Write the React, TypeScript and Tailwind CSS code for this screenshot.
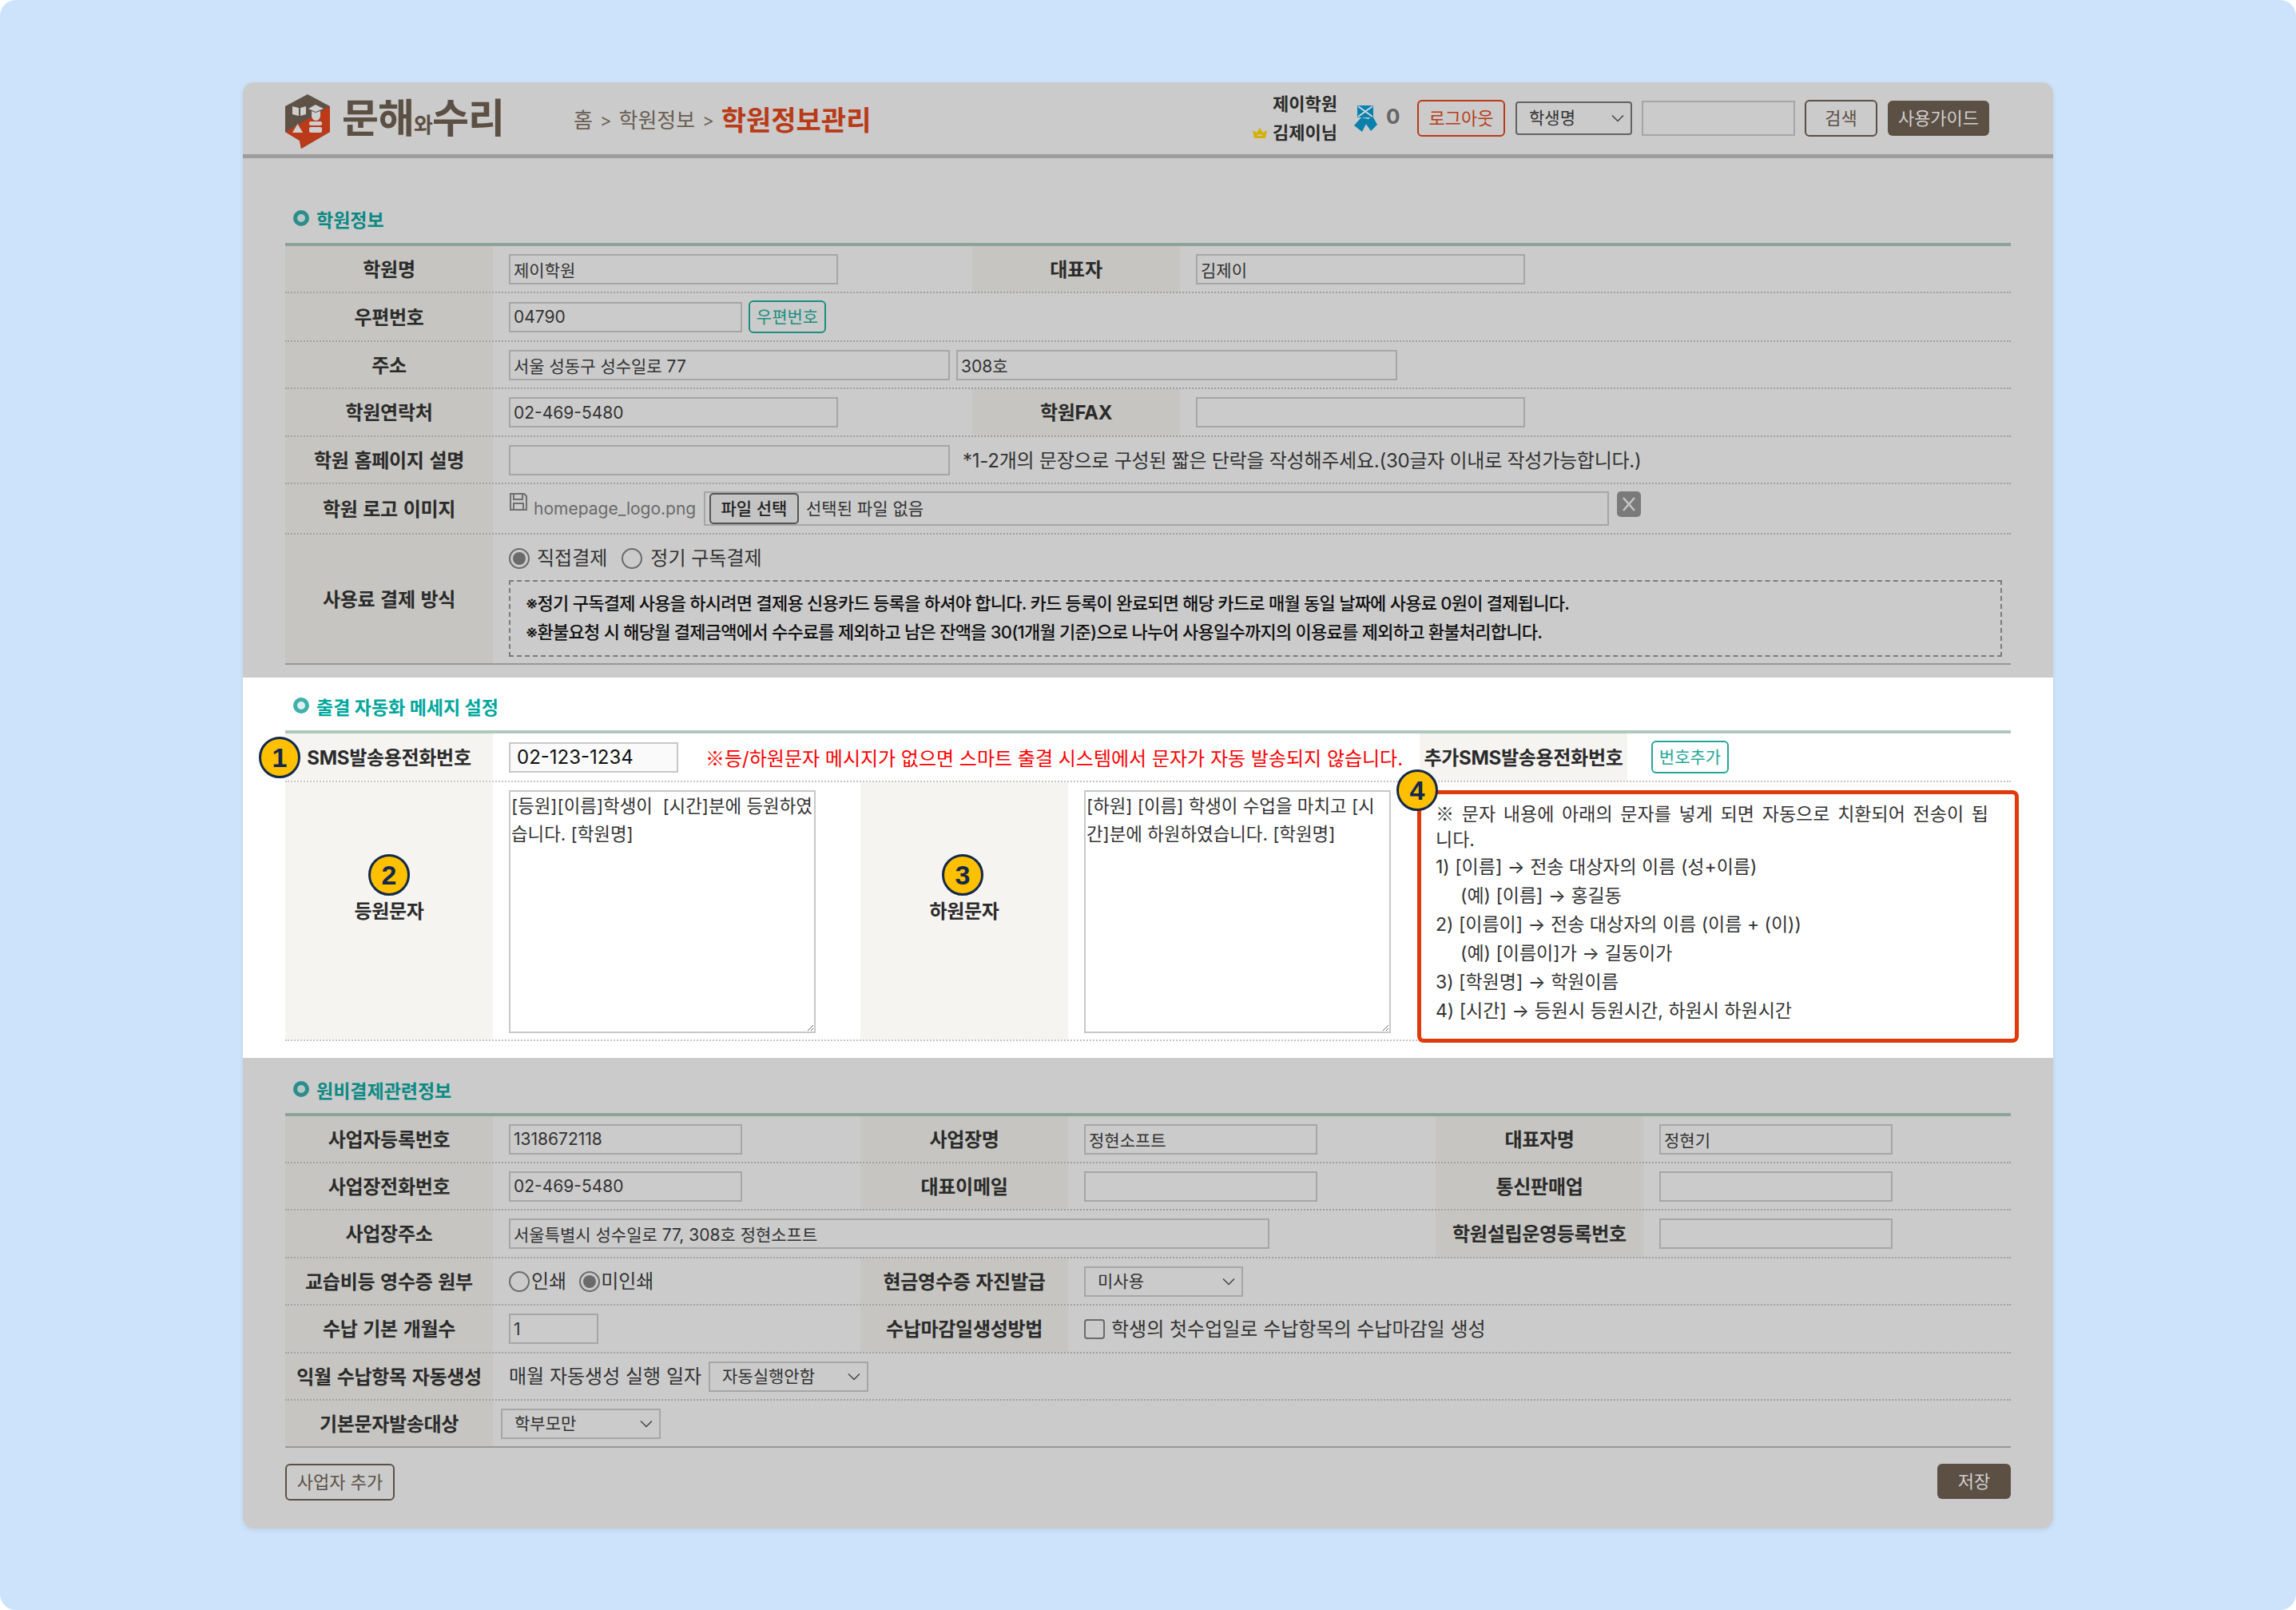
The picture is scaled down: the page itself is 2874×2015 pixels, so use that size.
import React from "react";

// 라벨 셀
function Label({ children, bright }: { children: React.ReactNode; bright?: boolean }) {
  return (
    <div className={`w-[260px] shrink-0 self-stretch flex items-center justify-center pt-[2px] text-[24px] tracking-[-0.3px] [word-spacing:1.5px] font-bold text-[#2b2b2b] ${bright ? "bg-[#f5f4f1]" : "bg-[#c6c5c1]"}`}>
      {children}
    </div>
  );
}

function Row({ className, children, bright }: { className: string; children?: React.ReactNode; bright?: boolean }) {
  return (
    <div className={`flex items-center border-b-2 border-dotted ${bright ? "border-[#c4c4c4]" : "border-[#a0a0a0]"} ${className}`}>
      {children}
    </div>
  );
}

function Value({ className, children }: { className: string; children?: React.ReactNode }) {
  return <div className={`flex items-center shrink-0 pl-[20px] ${className}`}>{children}</div>;
}

function Field({ value, className }: { value?: string; className: string }) {
  return (
    <input
      readOnly
      defaultValue={value}
      className={`border-2 border-[#a6a6a6] bg-transparent px-[4px] text-[21px] text-[#333333] outline-none ${className}`}
    />
  );
}

function Chevron() {
  return (
    <svg width="16" height="9" viewBox="0 0 16 9" fill="none" stroke="#444444" strokeWidth="1.5" className="absolute right-[10px] top-1/2 -translate-y-1/2 pointer-events-none">
      <path d="M1 1 L8 8 L15 1" />
    </svg>
  );
}

function Pick({ value, className, border }: { value: string; className: string; border?: string }) {
  return (
    <div className={`relative shrink-0 ${className}`}>
      <select
        defaultValue={value}
        className={`appearance-none w-full h-full border-2 ${border ?? "border-[#a6a6a6]"} bg-transparent pl-[15px] text-[21px] text-[#333333] outline-none`}
      >
        <option>{value}</option>
      </select>
      <Chevron />
    </div>
  );
}

function Radio({ checked }: { checked?: boolean }) {
  return (
    <span className="w-[26px] h-[26px] shrink-0 rounded-full border-2 border-[#6b6b6b] flex items-center justify-center">
      {checked && <span className="w-[16px] h-[16px] rounded-full bg-[#6b6b6b]" />}
    </span>
  );
}

function Badge({ n, className }: { n: number; className: string }) {
  return (
    <span className={`absolute w-[52px] h-[52px] rounded-full bg-[#ffc000] border-[3px] border-[#13294b] flex items-center justify-center text-[34px] font-bold text-[#13294b] [font-family:'Liberation_Sans',sans-serif] ${className}`}>
      {n}
    </span>
  );
}

function SectionTitle({ children, bright, className }: { children: React.ReactNode; bright?: boolean; className: string }) {
  return (
    <div className={`flex items-start gap-[9px] pl-[10px] border-b-4 ${bright ? "border-[#afc7bd]" : "border-[#8ca398]"} ${className}`}>
      <span className={`mt-[1px] w-[20px] h-[20px] rounded-full border-[5px] ${bright ? "border-[#3fb0aa] bg-[#dff1ef]" : "border-[#2d8d8a] bg-[#b5c9c7]"}`} />
      <span className={`text-[23px] leading-[28px] font-bold ${bright ? "text-[#00a79d]" : "text-[#0b8a85]"}`}>{children}</span>
    </div>
  );
}

function LogoMark() {
  return (
    <svg width="56" height="68" viewBox="0 0 56 68" className="shrink-0 mt-[8px]">
      <path d="M28 0 L56 15 L56 47 L20 68 L18 58 L0 47 L0 15 Z" fill="#5e5246" />
      <path d="M0 47 L56 15 L56 47 L20 68 L18 58 Z" fill="#ba3a1a" />
      <path d="M9 15 L17 17 L17 27 L9 25 Z M19 17 L26 15 L26 25 L19 27 Z" fill="#cfcfcf" />
      <path d="M29 18 L38 13 L48 18 L38 22 Z" fill="#cfcfcf" />
      <path d="M33 21 L38 23 L44 21 L44 27 A5.5 6 0 0 1 33 27 Z" fill="#cfcfcf" />
      <path d="M15.5 37 L22 48 L9 48 Z" fill="#cfcfcf" />
      <rect x="30" y="34" width="16" height="5" rx="2" fill="#cfcfcf" />
      <rect x="30" y="41" width="16" height="7" rx="2" fill="#cfcfcf" />
    </svg>
  );
}

function Ribbon() {
  return (
    <svg width="29" height="34" viewBox="0 0 29 34" className="shrink-0">
      <path d="M4 1 H24 V16 H4 Z" fill="#0a80ad" />
      <path d="M5 2 L23 15 M23 2 L5 15" stroke="#cbd9df" strokeWidth="2" />
      <path d="M9 16 L18 18 L10 34 L0 26 Z" fill="#0a80ad" />
      <path d="M20 16 L24 16 L29 25 L21 33 L14 23 Z" fill="#0a80ad" />
    </svg>
  );
}

function Crown() {
  return (
    <svg width="18" height="13" viewBox="0 0 18 13" className="shrink-0">
      <path d="M0 3 L5 6 L9 0 L13 6 L18 3 L16 13 H2 Z" fill="#d4b100" />
      <rect x="6" y="8.5" width="6" height="1.5" fill="#cbcbcb" />
    </svg>
  );
}

export default function App() {
  return (
    <div className="w-[2874px] h-[2015px] bg-white [font-family:'Inter','Noto_Sans_CJK_KR',sans-serif]">
      <div className="w-full h-full rounded-[20px] bg-[#cce3fb] pl-[304px] pt-[103px]">
        <div className="w-[2266px] h-[1810px] bg-[#cbcbcb] rounded-[14px] shadow-[0_2px_6px_rgba(0,0,0,0.08)]">
          {/* 상단 헤더 */}
          <header className="h-[95px] flex items-center border-b-[5px] border-[#9d9d9d] pl-[53px] pr-[80px]">
            <LogoMark />
            <div className="ml-[15px] pt-[8px] w-[290px] flex items-baseline font-bold text-[#5c5045] text-[50px] leading-[56px] tracking-[-1px]">
              문해<span className="text-[26px]">와</span>수리
            </div>
            <div className="flex items-center text-[26px] text-[#6a5f54] gap-[9px] pt-[5px]">
              <span>홈</span>
              <span className="text-[22px]">&gt;</span>
              <span>학원정보</span>
              <span className="text-[22px]">&gt;</span>
              <span className="text-[34px] leading-[40px] font-bold text-[#b93a17]">학원정보관리</span>
            </div>
            <div className="ml-auto flex items-center">
              <div className="flex flex-col items-end text-[22px] leading-[36px] font-bold text-[#2b2b2b]">
                <span>제이학원</span>
                <span className="flex items-center gap-[7px]"><Crown />김제이님</span>
              </div>
              <span className="ml-[21px]"><Ribbon /></span>
              <span className="ml-[11px] mb-[5px] w-[39px] text-[26px] font-bold text-[#666666]">0</span>
              <button className="w-[110px] h-[46px] rounded-[6px] border-2 border-[#b93a17] text-[22px] text-[#b93a17]">로그아웃</button>
              <Pick value="학생명" border="border-[#636363] rounded-[4px]" className="ml-[13px] w-[146px] h-[42px]" />
              <input readOnly className="ml-[12px] w-[192px] h-[44px] border-2 border-[#a6a6a6] bg-transparent outline-none" />
              <button className="ml-[12px] w-[91px] h-[46px] rounded-[6px] border-2 border-[#5c5045] text-[22px] text-[#5c5045]">검색</button>
              <button className="ml-[13px] w-[127px] h-[44px] rounded-[6px] bg-[#5c5045] text-[22px] text-[#cfcfcf]">사용가이드</button>
            </div>
          </header>

          {/* 학원정보 */}
          <section className="px-[53px] pb-[16px]">
            <SectionTitle className="h-[110px] pt-[64px]">학원정보</SectionTitle>
            <Row className="h-[59px]">
              <Label>학원명</Label>
              <Value className="w-[600px]"><Field value="제이학원" className="w-[412px] h-[38px]" /></Value>
              <Label>대표자</Label>
              <Value className="w-[500px]"><Field value="김제이" className="w-[412px] h-[38px]" /></Value>
            </Row>
            <Row className="h-[61px]">
              <Label>우편번호</Label>
              <Value className="flex-1">
                <Field value="04790" className="w-[292px] h-[38px]" />
                <button className="ml-[8px] w-[97px] h-[41px] rounded-[6px] border-2 border-[#1b8f80] text-[21px] text-[#1b8f80]">우편번호</button>
              </Value>
            </Row>
            <Row className="h-[59px]">
              <Label>주소</Label>
              <Value className="flex-1">
                <Field value="서울 성동구 성수일로 77" className="w-[552px] h-[38px]" />
                <Field value="308호" className="ml-[8px] w-[552px] h-[38px]" />
              </Value>
            </Row>
            <Row className="h-[60px]">
              <Label>학원연락처</Label>
              <Value className="w-[600px]"><Field value="02-469-5480" className="w-[412px] h-[38px]" /></Value>
              <Label>학원FAX</Label>
              <Value className="w-[500px]"><Field className="w-[412px] h-[38px]" /></Value>
            </Row>
            <Row className="h-[59px]">
              <Label>학원 홈페이지 설명</Label>
              <Value className="flex-1">
                <Field className="w-[552px] h-[38px]" />
                <span className="ml-[16px] pt-[2px] text-[24px] tracking-[-0.25px] text-[#333333]">*1-2개의 문장으로 구성된 짧은 단락을 작성해주세요.(30글자 이내로 작성가능합니다.)</span>
              </Value>
            </Row>
            <Row className="h-[63px]">
              <Label>학원 로고 이미지</Label>
              <Value className="flex-1">
                <svg width="24" height="24" viewBox="0 0 24 24" className="self-start mt-[1px] shrink-0" fill="none" stroke="#6f6f6f" strokeWidth="2">
                  <path d="M2 2 H19 L22 5 V22 H2 Z" />
                  <path d="M6 2 V9 H17 V2 M6 22 V14 H18 V22" />
                </svg>
                <span className="ml-[7px] w-[205px] text-[21px] text-[#6a6a6a] whitespace-nowrap">homepage_logo.png</span>
                <div className="ml-[8px] w-[1133px] h-[43px] border-2 border-[#a6a6a6] flex items-center pl-[5px]">
                  <button className="w-[112px] h-[39px] rounded-[5px] border-2 border-[#555555] bg-[#c4c4c4] text-[21px] font-medium text-[#222222]">파일 선택</button>
                  <span className="ml-[9px] text-[21px] text-[#333333]">선택된 파일 없음</span>
                </div>
                <span className="self-start ml-[10px] w-[30px] h-[32px] rounded-[5px] bg-[#7a7a7a] flex items-center justify-center">
                  <svg width="20" height="22" viewBox="0 0 20 22" fill="none" stroke="#c4c4c4" strokeWidth="2.5"><path d="M3 3 L17 19 M17 3 L3 19" /></svg>
                </span>
              </Value>
            </Row>
            <div className="h-[163px] flex items-stretch border-b-[2px] border-[#989898]">
              <Label>사용료 결제 방식</Label>
              <div className="pl-[20px] flex-1">
                <div className="mt-[17px] h-[26px] flex items-center text-[24px] text-[#333333]">
                  <Radio checked />
                  <span className="ml-[9px]">직접결제</span>
                  <span className="ml-[18px]"><Radio /></span>
                  <span className="ml-[10px]">정기 구독결제</span>
                </div>
                <div className="mt-[14px] w-[1869px] h-[96px] border-2 border-dashed border-[#7b7b7b] pl-[19px] pt-[9px] text-[22px] leading-[36px] font-medium tracking-[-0.75px] text-[#111111]">
                  <div>※정기 구독결제 사용을 하시려면 결제용 신용카드 등록을 하셔야 합니다. 카드 등록이 완료되면 해당 카드로 매월 동일 날짜에 사용료 0원이 결제됩니다.</div>
                  <div>※환불요청 시 해당월 결제금액에서 수수료를 제외하고 남은 잔액을 30(1개월 기준)으로 나누어 사용일수까지의 이용료를 제외하고 환불처리합니다.</div>
                </div>
              </div>
            </div>
          </section>

          {/* 출결 자동화 메세지 설정 */}
          <section className="relative h-[476px] bg-white px-[53px]">
            <SectionTitle bright className="h-[70px] pt-[24px]">출결 자동화 메세지 설정</SectionTitle>
            <Badge n={1} className="left-[20px] top-[74px]" />
            <Badge n={2} className="left-[157px] top-[221px]" />
            <Badge n={3} className="left-[875px] top-[221px]" />
            <Badge n={4} className="left-[1444px] top-[115px] z-10" />
            <Row bright className="h-[61px]">
              <Label bright>SMS발송용전화번호</Label>
              <Value className="w-[1160px]">
                <input readOnly defaultValue="02-123-1234" className="w-[212px] h-[38px] border-2 border-[#c8c8c8] bg-[#fafafa] pl-[8px] text-[24px] text-[#111111] outline-none" />
                <span className="ml-[34px] pt-[2px] text-[24px] text-[#ff0000] whitespace-nowrap"><span className="[font-family:'Noto_Sans_CJK_KR',sans-serif]">※</span>등/하원문자 메시지가 없으면 스마트 출결 시스템에서 문자가 자동 발송되지 않습니다.</span>
              </Value>
              <Label bright>추가SMS발송용전화번호</Label>
              <button className="ml-[30px] w-[97px] h-[41px] rounded-[6px] border-2 border-[#26a69a] text-[21px] text-[#26a69a]">번호추가</button>
            </Row>
            <Row bright className="h-[324px] items-start">
              <Label bright>등원문자</Label>
              <Value className="w-[460px] self-start pt-[10px]">
                <textarea readOnly defaultValue="[등원][이름]학생이  [시간]분에 등원하였습니다. [학원명]" className="w-[384px] h-[304px] border-2 border-[#c8c8c8] bg-white px-[1px] text-[22.4px] leading-[35px] text-[#333333] outline-none" />
              </Value>
              <Label bright>하원문자</Label>
              <Value className="w-[437px] self-start pt-[10px]">
                <textarea readOnly defaultValue="[하원] [이름] 학생이 수업을 마치고 [시간]분에 하원하였습니다. [학원명]" className="w-[384px] h-[304px] border-2 border-[#c8c8c8] bg-white px-[1px] text-[22.4px] leading-[35px] text-[#333333] outline-none" />
              </Value>
              <div className="mt-[10px] w-[753px] h-[316px] shrink-0 rounded-[8px] border-[5px] border-[#e03a0c] bg-white pl-[18px] pr-[30px] pt-[7px] text-[23px] leading-[36px] text-[#333333]">
                <div className="leading-[32px] [word-spacing:3.3px]"><span className="[font-family:'Noto_Sans_CJK_KR',sans-serif]">※</span> 문자 내용에 아래의 문자를 넣게 되면 자동으로 치환되어 전송이 됩니다.</div>
                <div>1) [이름] → 전송 대상자의 이름 (성+이름)</div>
                <div className="pl-[31px]">(예) [이름] → 홍길동</div>
                <div>2) [이름이] → 전송 대상자의 이름 (이름 + (이))</div>
                <div className="pl-[31px]">(예) [이름이]가 → 길동이가</div>
                <div>3) [학원명] → 학원이름</div>
                <div>4) [시간] → 등원시 등원시간, 하원시 하원시간</div>
              </div>
            </Row>
          </section>

          {/* 원비결제관련정보 */}
          <section className="px-[53px]">
            <SectionTitle className="h-[73px] pt-[28px]">원비결제관련정보</SectionTitle>
            <Row className="h-[59px]">
              <Label>사업자등록번호</Label>
              <Value className="w-[460px]"><Field value="1318672118" className="w-[292px] h-[38px]" /></Value>
              <Label>사업장명</Label>
              <Value className="w-[460px]"><Field value="정현소프트" className="w-[292px] h-[38px]" /></Value>
              <Label>대표자명</Label>
              <Value className="w-[460px]"><Field value="정현기" className="w-[292px] h-[38px]" /></Value>
            </Row>
            <Row className="h-[59px]">
              <Label>사업장전화번호</Label>
              <Value className="w-[460px]"><Field value="02-469-5480" className="w-[292px] h-[38px]" /></Value>
              <Label>대표이메일</Label>
              <Value className="w-[460px]"><Field className="w-[292px] h-[38px]" /></Value>
              <Label>통신판매업</Label>
              <Value className="w-[460px]"><Field className="w-[292px] h-[38px]" /></Value>
            </Row>
            <Row className="h-[60px]">
              <Label>사업장주소</Label>
              <Value className="w-[1180px]"><Field value="서울특별시 성수일로 77, 308호 정현소프트" className="w-[952px] h-[38px]" /></Value>
              <Label>학원설립운영등록번호</Label>
              <Value className="w-[460px]"><Field className="w-[292px] h-[38px]" /></Value>
            </Row>
            <Row className="h-[59px]">
              <Label>교습비등 영수증 원부</Label>
              <Value className="w-[460px] text-[24px] text-[#333333]">
                <Radio /><span className="ml-[2px]">인쇄</span>
                <span className="ml-[16px]"><Radio checked /></span><span className="ml-[1px]">미인쇄</span>
              </Value>
              <Label>현금영수증 자진발급</Label>
              <Value className="w-[460px]"><Pick value="미사용" className="w-[199px] h-[38px]" /></Value>
            </Row>
            <Row className="h-[60px]">
              <Label>수납 기본 개월수</Label>
              <Value className="w-[460px]"><Field value="1" className="w-[112px] h-[38px]" /></Value>
              <Label>수납마감일생성방법</Label>
              <Value className="flex-1 text-[24px] text-[#333333]">
                <span className="w-[26px] h-[25px] rounded-[4px] border-2 border-[#6b6b6b]" />
                <span className="ml-[8px] pt-[2px]">학생의 첫수업일로 수납항목의 수납마감일 생성</span>
              </Value>
            </Row>
            <Row className="h-[59px]">
              <Label>익월 수납항목 자동생성</Label>
              <Value className="flex-1 text-[24px] text-[#333333]">
                <span>매월 자동생성 실행 일자</span>
                <Pick value="자동실행안함" className="ml-[9px] w-[200px] h-[38px]" />
              </Value>
            </Row>
            <div className="h-[59px] flex items-center border-b-2 border-[#989898]">
              <Label>기본문자발송대상</Label>
              <Pick value="학부모만" className="ml-[10px] w-[200px] h-[38px]" />
            </div>
            <div className="mt-[20px] flex justify-between items-start">
              <button className="w-[137px] h-[46px] rounded-[6px] border-2 border-[#5c5045] text-[22px] text-[#5c5045]">사업자 추가</button>
              <button className="w-[92px] h-[44px] rounded-[6px] bg-[#5c5045] text-[22px] text-[#cfcfcf]">저장</button>
            </div>
          </section>
        </div>
      </div>
    </div>
  );
}
